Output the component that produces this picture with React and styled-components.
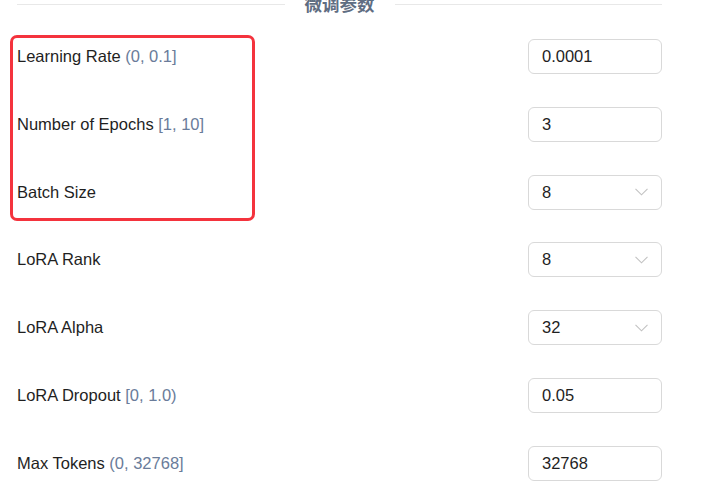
import React from "react";
import styled, { createGlobalStyle } from "styled-components";

const GlobalStyle = createGlobalStyle`
  html, body {
    margin: 0;
    padding: 0;
    background: #ffffff;
    overflow: hidden;
  }
  body {
    font-family: "Liberation Sans", Arial, "Noto Sans CJK SC", sans-serif;
    color: #1f1f1f;
  }
`;

const StyledPage = styled.div`
  width: 645px;
  padding-left: 17px;
`;

const StyledDivider = styled.div`
  display: flex;
  align-items: center;
  gap: 20px;
  height: 20px;
  margin-top: -6px;

  &::before,
  &::after {
    content: "";
    flex: 1;
    height: 1px;
    background: #e8e8e8;
  }
`;

const StyledDividerTitle = styled.span`
  font-family: "Noto Sans CJK SC", "Liberation Sans", sans-serif;
  font-size: 17.5px;
  font-weight: 700;
  line-height: 20px;
  color: #5f6d82;
`;

const StyledSection = styled.div`
  position: relative;
  margin-top: 25px;
  display: flex;
  flex-direction: column;
  gap: 32.8px;
`;

const StyledHighlight = styled.div`
  position: absolute;
  left: -7px;
  top: -4px;
  width: 239px;
  height: 180px;
  border: 3px solid #f4333d;
  border-radius: 7px;
  pointer-events: none;
`;

const StyledRow = styled.div`
  display: flex;
  align-items: center;
  justify-content: space-between;
  height: 35px;
`;

const StyledLabel = styled.div`
  font-size: 16.5px;
  color: #1f1f1f;
`;

const StyledRange = styled.span`
  color: #6a7c9a;
`;

const StyledField = styled.div`
  box-sizing: border-box;
  width: 134px;
  height: 35px;
  border: 1px solid #d9d9d9;
  border-radius: 6px;
  padding: 0 13px 0 13px;
  display: flex;
  align-items: center;
  justify-content: space-between;
  font-size: 16.5px;
  color: #1f1f1f;
  background: #fff;
`;

const Chevron = () => (
  <svg width="13" height="8" viewBox="0 0 13 8" fill="none">
    <polyline points="0.5,0.8 6.5,6.8 12.5,0.8" stroke="#c2c2c2" strokeWidth="1.1" />
  </svg>
);

const params = [
  { label: "Learning Rate", range: "(0, 0.1]", value: "0.0001" },
  { label: "Number of Epochs", range: "[1, 10]", value: "3" },
  { label: "Batch Size", value: "8", select: true },
  { label: "LoRA Rank", value: "8", select: true },
  { label: "LoRA Alpha", value: "32", select: true },
  { label: "LoRA Dropout", range: "[0, 1.0)", value: "0.05" },
  { label: "Max Tokens", range: "(0, 32768]", value: "32768" },
];

const App = () => {
  return (
    <>
      <GlobalStyle />
      <StyledPage>
        <StyledDivider>
          <StyledDividerTitle>微调参数</StyledDividerTitle>
        </StyledDivider>
        <StyledSection>
          <StyledHighlight />
          {params.map((p) => (
            <StyledRow key={p.label}>
              <StyledLabel>
                {p.label}
                {p.range && <StyledRange> {p.range}</StyledRange>}
              </StyledLabel>
              <StyledField>
                <span>{p.value}</span>
                {p.select && <Chevron />}
              </StyledField>
            </StyledRow>
          ))}
        </StyledSection>
      </StyledPage>
    </>
  );
};

export default App;
